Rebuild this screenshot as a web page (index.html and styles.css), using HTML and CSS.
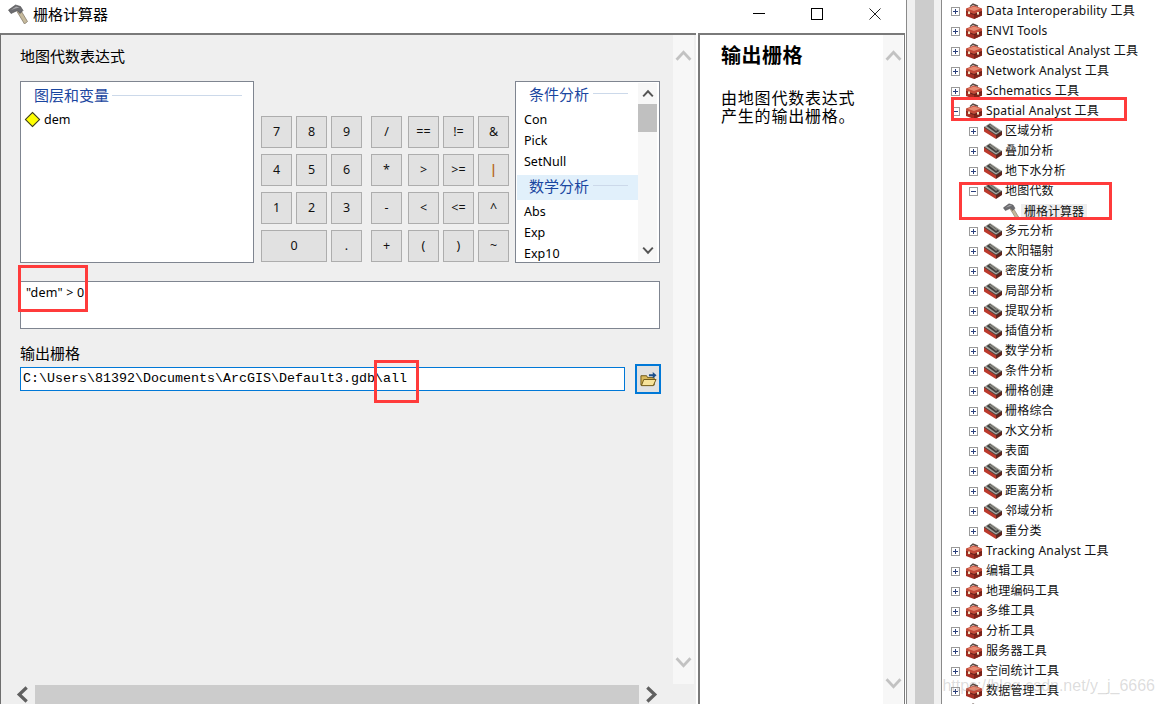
FILE: index.html
```html
<!DOCTYPE html>
<html lang="zh">
<head>
<meta charset="utf-8">
<title>栅格计算器</title>
<link rel="stylesheet" href="styles.css">
</head>
<body>
<svg class="defs" width="0" height="0" aria-hidden="true">
  <symbol id="toolbox" viewBox="0 0 18 16">
    <path d="M5 3.500L8 1.200l5 2" fill="none" stroke="#5a4a44" stroke-width="1.500"/>
    <path d="M1 5.500L9 2.500l8 3v3L9 11.500 1 8.500z" fill="#c24a38"/>
    <path d="M2.500 5.700L9 3.500l6.500 2L9 8z" fill="#e58a72"/>
    <path d="M1 8.500l8 3 8-3V12.500L9 16 1 13z" fill="#a52e22"/>
    <path d="M9 11.500V16l8-3.500V8.500z" fill="#7f231a"/>
    <path d="M1 8.500l8 3 8-3" fill="none" stroke="#571510" stroke-width=".9"/>
    <rect x="3" y="8.500" width="2" height="2.600" fill="#f0dfc0"/>
    <rect x="12" y="9" width="2" height="2.600" fill="#f0dfc0"/>
  </symbol>
  <symbol id="toolset" viewBox="0 0 18 16">
    <path d="M0 4l6-4 12 8-6 4z" fill="#a4a39c"/>
    <path d="M2.500 3l3.500-2 9.500 7-3.500 2z" fill="#3f3f3d"/>
    <path d="M5 2.500l1.500-.8 7 5.300-1.500 1z" fill="#8c8c86"/>
    <path d="M0 4v4.500L12 16v-4z" fill="#bb3a2c"/>
    <path d="M12 12v4l6-4V8z" fill="#5f241c"/>
    <path d="M0 4l12 8 6-4" fill="none" stroke="#2e2e2c" stroke-width=".8"/>
  </symbol>
  <symbol id="hammer" viewBox="0 0 20 20">
    <path d="M9 7.500L12 5l7.500 12.500-3 2.500z" fill="#c6ba9c" stroke="#7a7060" stroke-width=".7"/>
    <path d="M.5 6L7.500 1l5 1.500 2.500 4-3 3L9.500 6.500 3 9.500z" fill="#6c6c70" stroke="#48484a" stroke-width=".6"/>
    <path d="M3 6L8 2.500l3.500 1-4 1z" fill="#a9a9ac"/>
  </symbol>
  <symbol id="plus" viewBox="0 0 9 9">
    <rect x=".5" y=".5" width="8" height="8" fill="#fff" stroke="#9a9a9a"/>
    <path d="M2 4.500h5M4.500 2v5" stroke="#2b3f7c" fill="none"/>
  </symbol>
  <symbol id="minus" viewBox="0 0 9 9">
    <rect x=".5" y=".5" width="8" height="8" fill="#fff" stroke="#9a9a9a"/>
    <path d="M2 4.500h5" stroke="#2b3f7c" fill="none"/>
  </symbol>
  <symbol id="chev-up" viewBox="0 0 18 14">
    <path d="M1.500 11.500L9 3.500l7.500 8" fill="none" stroke="currentColor" stroke-width="3"/>
  </symbol>
  <symbol id="chev-down" viewBox="0 0 18 14">
    <path d="M1.500 2.500L9 10.500l7.500-8" fill="none" stroke="currentColor" stroke-width="3"/>
  </symbol>
  <symbol id="chev-left" viewBox="0 0 14 18">
    <path d="M11.500 1.500L3.500 9l8 7.500" fill="none" stroke="currentColor" stroke-width="3.500"/>
  </symbol>
  <symbol id="chev-right" viewBox="0 0 14 18">
    <path d="M2.500 1.500L10.500 9l-8 7.500" fill="none" stroke="currentColor" stroke-width="3.500"/>
  </symbol>
</svg>

<div class="screen">
  <section class="dialog">
    <header class="titlebar">
      <svg class="title-icon"><use href="#hammer"/></svg>
      <span class="title-text">栅格计算器</span>
      <div class="window-controls">
        <svg class="win-btn" viewBox="0 0 12 12"><path d="M0 5.500h12" stroke="#000" fill="none"/></svg>
        <svg class="win-btn" viewBox="0 0 12 12"><rect x=".5" y=".5" width="11" height="11" stroke="#000" fill="none"/></svg>
        <svg class="win-btn" viewBox="0 0 12 12"><path d="M.5.500l11 11M11.500.500l-11 11" stroke="#222" fill="none"/></svg>
      </div>
    </header>
    <div class="dialog-body">
      <div class="pane-left">
        <div class="pane-left-main">
          <div class="form">
            <div class="form-label">地图代数表达式</div>
            <div class="top-row">
              <div class="listbox layers">
                <div class="group-head"><span>图层和变量</span><i class="rule"></i></div>
                <div class="layer-item"><i class="diamond"></i><span>dem</span></div>
              </div>
              <div class="calc">
                <div class="keys digits">
                  <button>7</button><button>8</button><button>9</button>
                  <button>4</button><button>5</button><button>6</button>
                  <button>1</button><button>2</button><button>3</button>
                  <button class="wide">0</button><button>.</button>
                </div>
                <div class="keys ops">
                  <button>/</button><button>==</button><button>!=</button><button>&amp;</button>
                  <button>*</button><button>&gt;</button><button>&gt;=</button><button class="amber">|</button>
                  <button>-</button><button>&lt;</button><button>&lt;=</button><button>^</button>
                  <button>+</button><button>(</button><button>)</button><button>~</button>
                </div>
              </div>
              <div class="listbox funcs">
                <div class="func-list">
                  <div class="group-head func-head"><span>条件分析</span><i class="rule"></i></div>
                  <div class="func">Con</div>
                  <div class="func">Pick</div>
                  <div class="func">SetNull</div>
                  <div class="group-head func-head active"><span>数学分析</span><i class="rule"></i></div>
                  <div class="func">Abs</div>
                  <div class="func">Exp</div>
                  <div class="func">Exp10</div>
                </div>
                <div class="list-scroll">
                  <svg class="mini-chev"><use href="#chev-up"/></svg>
                  <div class="list-track"><div class="list-thumb"></div></div>
                  <svg class="mini-chev"><use href="#chev-down"/></svg>
                </div>
              </div>
            </div>
            <div class="expr">"dem" &gt; 0</div>
            <div class="form-label output-label">输出栅格</div>
            <div class="output-row">
              <div class="path-input">C:\Users\81392\Documents\ArcGIS\Default3.gdb\all</div>
              <button class="browse">
                <svg viewBox="0 0 18 18" class="folder">
                  <path d="M1 15V5h6l1 2h7v8z" fill="#d8b85a" stroke="#6c5514"/>
                  <path d="M1.500 15.500L4 9h13l-3 6.500z" fill="#f7e39a" stroke="#6c5514"/>
                  <path d="M9.500 3.500h4V1l4 3.500-4 3.500V5.500h-4z" fill="#1a4f8c"/>
                </svg>
              </button>
            </div>
          </div>
          <div class="vscroll">
            <svg class="chev"><use href="#chev-up"/></svg>
            <svg class="chev"><use href="#chev-down"/></svg>
          </div>
        </div>
        <div class="hscroll">
          <svg class="hchev"><use href="#chev-left"/></svg>
          <div class="hthumb"></div>
          <svg class="hchev"><use href="#chev-right"/></svg>
        </div>
      </div>
      <div class="pane-right">
        <div class="help">
          <h2 class="help-title">输出栅格</h2>
          <p class="help-text">由地图代数表达式<br>产生的输出栅格。</p>
        </div>
        <div class="vscroll help-scroll">
          <svg class="chev"><use href="#chev-up"/></svg>
          <svg class="chev"><use href="#chev-down"/></svg>
        </div>
      </div>
    </div>
  </section>

  <div class="gutter"><div class="gutter-bar"></div></div>

  <aside class="tree">
    <div class="row"><svg class="exp"><use href="#plus"/></svg><svg class="box"><use href="#toolbox"/></svg><span>Data Interoperability 工具</span></div>
    <div class="row"><svg class="exp"><use href="#plus"/></svg><svg class="box"><use href="#toolbox"/></svg><span>ENVI Tools</span></div>
    <div class="row"><svg class="exp"><use href="#plus"/></svg><svg class="box"><use href="#toolbox"/></svg><span>Geostatistical Analyst 工具</span></div>
    <div class="row"><svg class="exp"><use href="#plus"/></svg><svg class="box"><use href="#toolbox"/></svg><span>Network Analyst 工具</span></div>
    <div class="row"><svg class="exp"><use href="#plus"/></svg><svg class="box"><use href="#toolbox"/></svg><span>Schematics 工具</span></div>
    <div class="row"><svg class="exp"><use href="#minus"/></svg><svg class="box"><use href="#toolbox"/></svg><span>Spatial Analyst 工具</span></div>
    <div class="row sub"><svg class="exp"><use href="#plus"/></svg><svg class="set"><use href="#toolset"/></svg><span>区域分析</span></div>
    <div class="row sub"><svg class="exp"><use href="#plus"/></svg><svg class="set"><use href="#toolset"/></svg><span>叠加分析</span></div>
    <div class="row sub"><svg class="exp"><use href="#plus"/></svg><svg class="set"><use href="#toolset"/></svg><span>地下水分析</span></div>
    <div class="row sub"><svg class="exp"><use href="#minus"/></svg><svg class="set"><use href="#toolset"/></svg><span>地图代数</span></div>
    <div class="row tool"><svg class="ham"><use href="#hammer"/></svg><span class="selected">栅格计算器</span></div>
    <div class="row sub"><svg class="exp"><use href="#plus"/></svg><svg class="set"><use href="#toolset"/></svg><span>多元分析</span></div>
    <div class="row sub"><svg class="exp"><use href="#plus"/></svg><svg class="set"><use href="#toolset"/></svg><span>太阳辐射</span></div>
    <div class="row sub"><svg class="exp"><use href="#plus"/></svg><svg class="set"><use href="#toolset"/></svg><span>密度分析</span></div>
    <div class="row sub"><svg class="exp"><use href="#plus"/></svg><svg class="set"><use href="#toolset"/></svg><span>局部分析</span></div>
    <div class="row sub"><svg class="exp"><use href="#plus"/></svg><svg class="set"><use href="#toolset"/></svg><span>提取分析</span></div>
    <div class="row sub"><svg class="exp"><use href="#plus"/></svg><svg class="set"><use href="#toolset"/></svg><span>插值分析</span></div>
    <div class="row sub"><svg class="exp"><use href="#plus"/></svg><svg class="set"><use href="#toolset"/></svg><span>数学分析</span></div>
    <div class="row sub"><svg class="exp"><use href="#plus"/></svg><svg class="set"><use href="#toolset"/></svg><span>条件分析</span></div>
    <div class="row sub"><svg class="exp"><use href="#plus"/></svg><svg class="set"><use href="#toolset"/></svg><span>栅格创建</span></div>
    <div class="row sub"><svg class="exp"><use href="#plus"/></svg><svg class="set"><use href="#toolset"/></svg><span>栅格综合</span></div>
    <div class="row sub"><svg class="exp"><use href="#plus"/></svg><svg class="set"><use href="#toolset"/></svg><span>水文分析</span></div>
    <div class="row sub"><svg class="exp"><use href="#plus"/></svg><svg class="set"><use href="#toolset"/></svg><span>表面</span></div>
    <div class="row sub"><svg class="exp"><use href="#plus"/></svg><svg class="set"><use href="#toolset"/></svg><span>表面分析</span></div>
    <div class="row sub"><svg class="exp"><use href="#plus"/></svg><svg class="set"><use href="#toolset"/></svg><span>距离分析</span></div>
    <div class="row sub"><svg class="exp"><use href="#plus"/></svg><svg class="set"><use href="#toolset"/></svg><span>邻域分析</span></div>
    <div class="row sub"><svg class="exp"><use href="#plus"/></svg><svg class="set"><use href="#toolset"/></svg><span>重分类</span></div>
    <div class="row"><svg class="exp"><use href="#plus"/></svg><svg class="box"><use href="#toolbox"/></svg><span>Tracking Analyst 工具</span></div>
    <div class="row"><svg class="exp"><use href="#plus"/></svg><svg class="box"><use href="#toolbox"/></svg><span>编辑工具</span></div>
    <div class="row"><svg class="exp"><use href="#plus"/></svg><svg class="box"><use href="#toolbox"/></svg><span>地理编码工具</span></div>
    <div class="row"><svg class="exp"><use href="#plus"/></svg><svg class="box"><use href="#toolbox"/></svg><span>多维工具</span></div>
    <div class="row"><svg class="exp"><use href="#plus"/></svg><svg class="box"><use href="#toolbox"/></svg><span>分析工具</span></div>
    <div class="row"><svg class="exp"><use href="#plus"/></svg><svg class="box"><use href="#toolbox"/></svg><span>服务器工具</span></div>
    <div class="row"><svg class="exp"><use href="#plus"/></svg><svg class="box"><use href="#toolbox"/></svg><span>空间统计工具</span></div>
    <div class="row"><svg class="exp"><use href="#plus"/></svg><svg class="box"><use href="#toolbox"/></svg><span>数据管理工具</span></div>
    <div class="row"><svg class="exp"><use href="#plus"/></svg><svg class="box"><use href="#toolbox"/></svg></div>
  </aside>

  <i class="mark mark-expr"></i>
  <i class="mark mark-path"></i>
  <i class="mark mark-spatial"></i>
  <i class="mark mark-algebra"></i>
  <div class="watermark">https://blog.csdn.net/y_j_6666</div>
</div>
</body>
</html>
```
FILE: styles.css
```css
* { box-sizing: border-box; }
html, body { margin: 0; padding: 0; }
body {
  font-family: "Noto Sans", "Noto Sans CJK SC", sans-serif;
  font-size: 12px;
  color: #000;
  background: #fff;
}
.defs { position: absolute; }
.screen {
  position: relative;
  display: flex;
  width: 1164px;
  height: 704px;
  overflow: hidden;
}

/* dialog */
.dialog {
  display: flex;
  flex-direction: column;
  width: 907px;
  height: 704px;
  border-right: 1px solid #8a8a8a;
}
.titlebar {
  display: flex;
  align-items: center;
  height: 33px;
  padding-left: 8px;
  background: #fff;
  flex: none;
}
.title-icon { width: 20px; height: 20px; margin-top: -5px; }
.title-text {
  margin-left: 5px;
  margin-top: -5px;
  font-size: 15px;
  line-height: 18px;
  font-family: "Noto Sans CJK SC", sans-serif;
}
.window-controls {
  display: flex;
  align-items: center;
  gap: 46px;
  margin-left: auto;
  margin-right: 25px;
  margin-top: -5px;
}
.win-btn { width: 12px; height: 12px; display: block; }
.dialog-body { display: flex; flex: 1; min-height: 0; }

/* left pane */
.pane-left {
  display: flex;
  flex-direction: column;
  width: 696px;
  background: #efefef;
  border-top: 2px solid #7a7a7a;
  border-left: 1px solid #6e6e6e;
  margin-right: 2px;
}
.pane-left-main { display: flex; flex: 1; min-height: 0; }
.form { width: 672px; padding: 11px 0 0 19px; }
.form-label {
  height: 20px;
  font-size: 15px;
  line-height: 20px;
  font-family: "Noto Sans CJK SC", sans-serif;
}
.top-row { display: flex; margin-top: 15px; height: 182px; }
.listbox { background: #fff; border: 1px solid #7f8590; height: 182px; }
.layers { width: 234px; padding: 5px 11px 0 13px; }
.group-head {
  display: flex;
  align-items: center;
  gap: 3px;
  color: #1a46a0;
  font-size: 15px;
  line-height: 16px;
  height: 16px;
  font-family: "Noto Sans CJK SC", sans-serif;
}
.rule { flex: 1; height: 1px; background: #ccd9ea; }
.layer-item {
  display: flex;
  align-items: center;
  height: 16px;
  margin: 8px 0 0 -8px;
  font-size: 12.5px;
}
.diamond {
  width: 11px;
  height: 11px;
  margin: 0 6px 0 1px;
  background: #ffff00;
  border: 1px solid #333;
  transform: rotate(45deg);
}
.calc { display: flex; gap: 9px; margin: 35px 6px 0 7px; }
.keys { display: grid; gap: 6px 4px; grid-auto-rows: 32px; }
.digits { grid-template-columns: repeat(3, 31px); }
.ops { grid-template-columns: 33px 31px 31px 31px; }
.ops button:nth-child(4n + 1) { width: 31px; }
.keys button {
  padding: 0;
  background: #e1e1e1;
  border: 1px solid #adadad;
  font: 12.5px/1 "Noto Sans", sans-serif;
  color: #111;
}
.keys .wide { grid-column: span 2; }
.keys .amber { color: #b5651d; font-weight: 700; }
.funcs { display: flex; width: 145px; padding: 1px 2px 1px 1px; }
.func-list { width: 121px; flex: none; overflow: hidden; }
.func-head { height: 25px; padding: 0 10px 4px 12px; gap: 4px; }
.func-head.active { background: #e1f0fb; margin-top: 3px; }
.func { height: 21px; line-height: 21px; padding-left: 7px; font-size: 12.5px; }
.func-head + .func { margin-top: 1px; }
.list-scroll {
  display: flex;
  flex-direction: column;
  align-items: center;
  flex: none;
  width: 19px;
  background: #f7f7f7;
}
.mini-chev { width: 12px; height: 9px; margin: 6px 0; color: #555; flex: none; }
.list-track { flex: 1; width: 100%; }
.list-thumb { width: 100%; height: 28px; background: #c0c0c0; }
.expr {
  width: 640px;
  height: 48px;
  margin-top: 18px;
  padding: 2px 5px;
  background: #fff;
  border: 1px solid #7f8590;
  font-size: 12.5px;
  line-height: 18px;
  letter-spacing: .2px;
}
.output-label { margin-top: 14px; margin-bottom: 1px; }
.output-row { display: flex; align-items: center; gap: 10px; height: 30px; width: 641px; }
.path-input {
  flex: none;
  width: 605px;
  height: 24px;
  padding-left: 2px;
  background: #fff;
  border: 1px solid #0078d7;
  font-family: "Liberation Mono", monospace;
  font-size: 13.33px;
  line-height: 22px;
}
.browse {
  display: flex;
  align-items: center;
  justify-content: center;
  flex: none;
  width: 26px;
  height: 30px;
  padding: 0;
  background: #e1e1e1;
  border: 2px solid #0078d7;
}
.folder { width: 17px; height: 17px; }

.vscroll {
  display: flex;
  flex-direction: column;
  justify-content: space-between;
  align-items: center;
  width: 21px;
  height: 649px;
  padding: 14px 0 15px;
  background: #f7f7f7;
  color: #c2c2c2;
}
.chev { width: 17px; height: 13px; }
.hscroll { display: flex; align-items: center; height: 19px; padding-left: 15px; gap: 6px; background: #efefef; }
.hchev { width: 13px; height: 17px; color: #606060; flex: none; }
.hthumb { width: 604px; height: 19px; background: #cccccc; }

/* right pane */
.pane-right {
  display: flex;
  width: 207px;
  background: #fff;
  border-top: 2px solid #7a7a7a;
  border-left: 2px solid #7a7a7a;
  border-right: 1px solid #7a7a7a;
}
.help { flex: 1; padding: 7px 0 0 21px; }
.help-title {
  margin: 0;
  font-size: 20px;
  line-height: 26px;
  font-weight: 700;
  letter-spacing: .5px;
  font-family: "Noto Sans CJK SC", sans-serif;
}
.help-text {
  margin: 20px 0 0;
  font-size: 16px;
  line-height: 18px;
  letter-spacing: .8px;
  font-family: "Noto Sans CJK SC", sans-serif;
}
.help-scroll { height: 669px; padding-bottom: 14px; margin-right: 1px; width: 20px; }

/* splitter between dialog and tree */
.gutter {
  width: 35px;
  flex: none;
  padding: 0 7px 0 8px;
  background: #f0f0f0;
  border-right: 1px solid #8a8a8a;
}
.gutter-bar { height: 100%; background: #cccccc; }

/* tree */
.tree { flex: 1; min-width: 0; padding: 1px 0 0 9px; background: #fff; }
.row {
  display: flex;
  align-items: center;
  height: 20px;
  white-space: nowrap;
  font-size: 12px;
  letter-spacing: .2px;
  line-height: 20px;
  color: #111;
}
.exp { width: 9px; height: 9px; flex: none; }
.box { width: 18px; height: 16px; margin: 0 3px 0 5px; flex: none; }
.sub { padding-left: 18px; }
.set { width: 18px; height: 16px; margin: 0 3px 0 6px; flex: none; }
.tool { padding-left: 52px; }
.ham { width: 16px; height: 16px; margin-right: 2px; flex: none; }
.selected { padding: 0 3px; background: #eeeeee; line-height: 15px; height: 15px; letter-spacing: 0; }

/* annotations over the screenshot */
.mark { position: absolute; border: 3px solid #ff3b3b; }
.mark-expr { left: 18px; top: 265px; width: 70px; height: 47px; }
.mark-path { left: 374px; top: 360px; width: 45px; height: 43px; }
.mark-spatial { left: 951px; top: 97px; width: 176px; height: 24px; }
.mark-algebra { left: 959px; top: 182px; width: 153px; height: 38px; }
.watermark {
  position: absolute;
  right: 9px;
  top: 677px;
  font: 16px/18px "Liberation Sans", sans-serif;
  color: rgba(140, 140, 140, .3);
  white-space: nowrap;
}
```
